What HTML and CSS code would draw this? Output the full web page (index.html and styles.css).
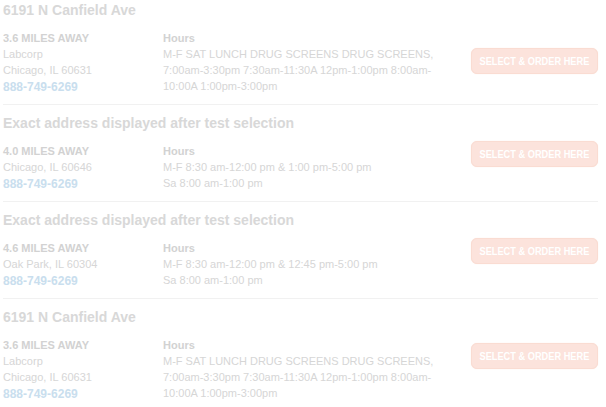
FILE: index.html
```html
<!DOCTYPE html>
<html lang="en">
<head>
<meta charset="utf-8">
<title>Locations</title>
<link rel="stylesheet" href="styles.css">
</head>
<body>
<div class="list">
  <div class="item">
    <div class="title">6191 N Canfield Ave</div>
    <div class="info">
      <div class="dist">3.6 MILES AWAY</div>
      <div>Labcorp</div>
      <div>Chicago, IL 60631</div>
      <div class="phone">888-749-6269</div>
    </div>
    <div class="hours">
      <div class="hours-label">Hours</div>
      <div>M-F SAT LUNCH DRUG SCREENS DRUG SCREENS, 7:00am-3:30pm 7:30am-11:30A 12pm-1:00pm 8:00am-<wbr>10:00A 1:00pm-3:00pm</div>
    </div>
    <a class="btn" href="#"><span class="btn-text">SELECT &amp; ORDER HERE</span></a>
  </div>
  <div class="item">
    <div class="title">Exact address displayed after test selection</div>
    <div class="info">
      <div class="dist">4.0 MILES AWAY</div>
      <div>Chicago, IL 60646</div>
      <div class="phone">888-749-6269</div>
    </div>
    <div class="hours">
      <div class="hours-label">Hours</div>
      <div>M-F 8:30 am-12:00 pm &amp; 1:00 pm-5:00 pm</div>
      <div>Sa 8:00 am-1:00 pm</div>
    </div>
    <a class="btn" href="#"><span class="btn-text">SELECT &amp; ORDER HERE</span></a>
  </div>
  <div class="item">
    <div class="title">Exact address displayed after test selection</div>
    <div class="info">
      <div class="dist">4.6 MILES AWAY</div>
      <div>Oak Park, IL 60304</div>
      <div class="phone">888-749-6269</div>
    </div>
    <div class="hours">
      <div class="hours-label">Hours</div>
      <div>M-F 8:30 am-12:00 pm &amp; 12:45 pm-5:00 pm</div>
      <div>Sa 8:00 am-1:00 pm</div>
    </div>
    <a class="btn" href="#"><span class="btn-text">SELECT &amp; ORDER HERE</span></a>
  </div>
  <div class="item">
    <div class="title">6191 N Canfield Ave</div>
    <div class="info">
      <div class="dist">3.6 MILES AWAY</div>
      <div>Labcorp</div>
      <div>Chicago, IL 60631</div>
      <div class="phone">888-749-6269</div>
    </div>
    <div class="hours">
      <div class="hours-label">Hours</div>
      <div>M-F SAT LUNCH DRUG SCREENS DRUG SCREENS, 7:00am-3:30pm 7:30am-11:30A 12pm-1:00pm 8:00am-<wbr>10:00A 1:00pm-3:00pm</div>
    </div>
    <a class="btn" href="#"><span class="btn-text">SELECT &amp; ORDER HERE</span></a>
  </div>
</div>
</body>
</html>
```

FILE: styles.css
```css
html, body {
  margin: 0;
  padding: 0;
  background: #ffffff;
}

body {
  font-family: "Liberation Sans", Arial, sans-serif;
  font-size: 11px;
  line-height: 16px;
  color: #d6d6d6;
  overflow: hidden;
}

.list {
  padding: 0 8px 0 3px;
}

.item {
  display: grid;
  grid-template-columns: 160px 290px 1fr;
  grid-template-rows: auto auto;
  padding: 9px 0 10px;
  border-bottom: 1px solid #f1f1f1;
}

.item:first-child {
  padding-top: 1px;
}

.title {
  grid-column: 1 / 3;
  font-size: 14px;
  line-height: 18px;
  font-weight: bold;
  color: #d8d8d8;
  margin-bottom: 11px;
}

.info {
  grid-column: 1;
  grid-row: 2;
}

.dist {
  font-weight: bold;
  color: #d2d2d2;
}

.phone {
  font-size: 12px;
  font-weight: bold;
  color: #c9deee;
  line-height: 16px;
  position: relative;
  top: 1px;
}

.hours {
  grid-column: 2;
  grid-row: 2;
}

.hours-label {
  font-weight: bold;
  color: #d2d2d2;
}

.btn {
  grid-column: 3;
  grid-row: 1 / 3;
  align-self: center;
  justify-self: end;
  width: 127px;
  height: 26px;
  margin-top: 3px;
  box-sizing: border-box;
  display: flex;
  align-items: center;
  justify-content: center;
  background: #fce3dc;
  border: 1px solid #fadcd2;
  border-radius: 6px;
  box-shadow: 0 0 1px #fbe0d8;
  color: #ffffff;
  font-family: "Liberation Sans", Arial, sans-serif;
  font-weight: bold;
  font-size: 11px;
  text-decoration: none;
  white-space: nowrap;
}

.btn-text {
  display: inline-block;
  transform: scaleX(0.84);
}

.item:first-child .btn {
  margin-top: 26px;
}
```
